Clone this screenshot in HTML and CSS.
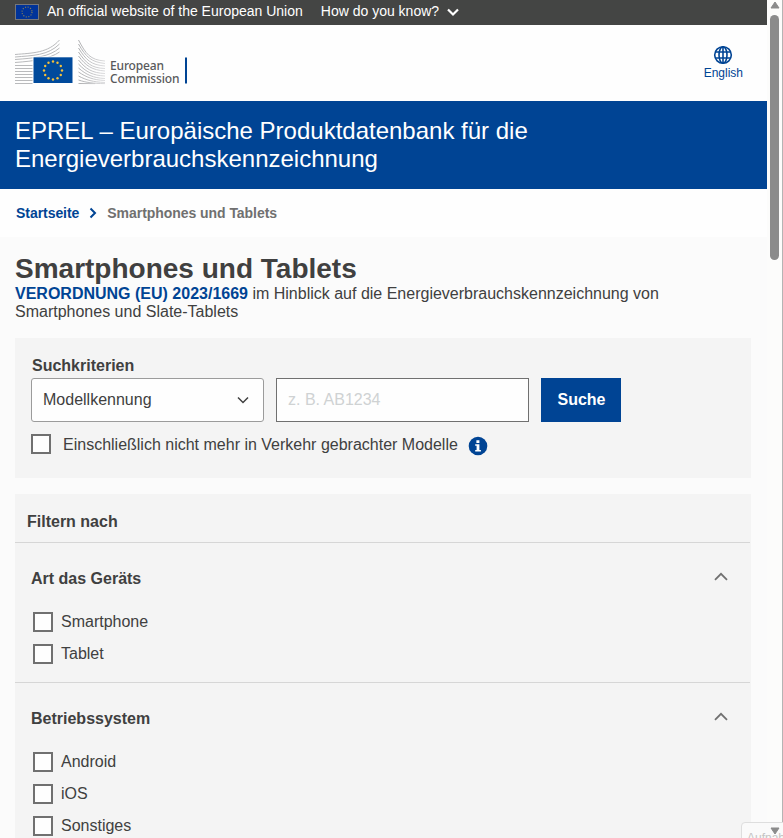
FILE: index.html
```html
<!DOCTYPE html>
<html lang="de">
<head>
    <meta charset="UTF-8">
    <meta name="viewport" content="width=device-width, initial-scale=1.0">
    <title>EPREL – Smartphones und Tablets</title>
    <link rel="stylesheet" href="styles.css">
</head>
<body>
    <div class="page">
        <div class="globan">
            <svg class="globan-flag" width="24" height="16" viewBox="0 0 24 16">
                <rect x="0.5" y="0.5" width="23" height="15" fill="#039" stroke="#75767a" />
                <circle cx="12" cy="8" r="5" fill="none" stroke="#8a8256" stroke-width="1.1" stroke-dasharray="1.1 1.518" />
            </svg>
            <span class="globan-text">An official website of the European Union</span>
            <a class="globan-link">How do you know?</a>
            <svg width="14" height="10" viewBox="0 0 14 10"><path d="M2 2.500l5 5 5-5" fill="none" stroke="#fff" stroke-width="2.200" /></svg>
        </div>

        <header class="site-header">
            <svg class="logo" width="174" height="48" viewBox="0 0 174 48">
                <defs>
                    <linearGradient id="fade" gradientUnits="userSpaceOnUse" x1="63" y1="0" x2="90" y2="0">
                        <stop offset="0" stop-color="#adaeb0" />
                        <stop offset="1" stop-color="#dddddf" />
                    </linearGradient>
                </defs>
                <g fill="none" stroke="#b9babc" stroke-width="1">
                    <path d="M0 15.500C18 14 33 14 44.500 1" />
                    <path d="M0 18C18 16.500 33 16.500 44.500 5" />
                    <path d="M0 20.500C20 19 34 18 44.500 9" />
                    <path d="M0 23.500C20 22 34 20 44.500 13" />
                    <path d="M0 26.500H19M0 29.500H19M0 32.500H19M0 35.500H19M0 38.500H19M0 41.500H19M0 44.500H19" />
                </g>
                <g fill="none" stroke="url(#fade)" stroke-width="1">
                    <path d="M63.500 1C71 15 75 21 90 22" />
                    <path d="M63.500 5C71 18 76 23 90 24.500" />
                    <path d="M63.500 9C71 21 76 26 90 27" />
                    <path d="M63.500 13C71 24 76 29 90 29.500" />
                    <path d="M63.500 17C71 27 77 31 90 32" />
                    <path d="M63.500 21C71 30 77 34 90 34.500" />
                    <path d="M63.500 25C71 33 78 36.500 90 37" />
                    <path d="M63.500 29C71 35.500 78 39 90 39.500" />
                    <path d="M63.500 33C71 38 78 41 90 41.500" />
                    <path d="M63.500 37C71 41 78 43 90 43.500" />
                    <path d="M63.500 41C71 43.500 78 44.500 90 44.600" />
                    <path d="M63.500 44.500L80 44.600" />
                </g>
                <rect x="17.500" y="17.500" width="41" height="27.500" fill="#fefefe" />
                <rect x="18.500" y="18.300" width="39" height="25.700" fill="#004a9c" />
                <g fill="#f3c03a">
                    <circle cx="38" cy="22.500" r="1.200" /><circle cx="42.500" cy="23.700" r="1.200" />
                    <circle cx="45.800" cy="27" r="1.200" /><circle cx="47" cy="31.500" r="1.200" />
                    <circle cx="45.800" cy="36" r="1.200" /><circle cx="42.500" cy="39.300" r="1.200" />
                    <circle cx="38" cy="40.500" r="1.200" /><circle cx="33.500" cy="39.300" r="1.200" />
                    <circle cx="30.200" cy="36" r="1.200" /><circle cx="29" cy="31.500" r="1.200" />
                    <circle cx="30.200" cy="27" r="1.200" /><circle cx="33.500" cy="23.700" r="1.200" />
                </g>
                <text class="logo-text" x="95" y="31" textLength="54">European</text>
                <text class="logo-text" x="95" y="44" textLength="69.500">Commission</text>
                <rect x="170" y="18.500" width="2" height="26" fill="#004494" />
            </svg>
            <a class="language">
                <svg width="20" height="20" viewBox="0 0 20 20" fill="none" stroke="#004494" stroke-width="1.600">
                    <circle cx="10" cy="10" r="8.300" />
                    <ellipse cx="10" cy="10" rx="4" ry="8.300" />
                    <path d="M10 1.500v17M2.500 7h15M2.500 13h15" />
                </svg>
                <span>English</span>
            </a>
        </header>

        <div class="banner">EPREL – Europäische Produktdatenbank für die Energieverbrauchskennzeichnung</div>

        <nav class="breadcrumb">
            <a class="breadcrumb-link">Startseite</a>
            <svg width="10" height="12" viewBox="0 0 10 12"><path d="M2.500 1.500L7 6l-4.500 4.500" fill="none" stroke="#004494" stroke-width="2" /></svg>
            <span>Smartphones und Tablets</span>
        </nav>

        <main class="content">
            <h1>Smartphones und Tablets</h1>
            <p class="intro"><a>VERORDNUNG (EU) 2023/1669</a> im Hinblick auf die Energieverbrauchskennzeichnung von Smartphones und Slate-Tablets</p>

            <form class="search">
                <label class="search-label">Suchkriterien</label>
                <div class="search-row">
                    <div class="select">
                        <span>Modellkennung</span>
                        <svg width="12" height="8" viewBox="0 0 12 8"><path d="M1 1.500l5 5 5-5" fill="none" stroke="#404040" stroke-width="1.500" /></svg>
                    </div>
                    <input class="search-input" type="text" placeholder="z. B. AB1234">
                    <button class="search-button" type="button">Suche</button>
                </div>
                <label class="check check-old">
                    <input type="checkbox">
                    <span>Einschließlich nicht mehr in Verkehr gebrachter Modelle</span>
                    <svg class="info" width="20" height="20" viewBox="0 0 20 20">
                        <circle cx="10" cy="10" r="9.300" fill="#004494" />
                        <path d="M8.400 4.300h3v2.700h-3zM7.200 8.200h4.200v5.700h1.500v1.600H7.200v-1.600h1.400V9.800H7.200z" fill="#fff" />
                    </svg>
                </label>
            </form>

            <section class="filters">
                <h2>Filtern nach</h2>
                <div class="filter-group">
                    <div class="filter-head">
                        <h3>Art das Geräts</h3>
                        <svg width="14" height="9" viewBox="0 0 14 9"><path d="M1 7.800l6-6 6 6" fill="none" stroke="#707070" stroke-width="1.800" /></svg>
                    </div>
                    <label class="check"><input type="checkbox"><span>Smartphone</span></label>
                    <label class="check"><input type="checkbox"><span>Tablet</span></label>
                </div>
                <div class="filter-group">
                    <div class="filter-head">
                        <h3>Betriebssystem</h3>
                        <svg width="14" height="9" viewBox="0 0 14 9"><path d="M1 7.800l6-6 6 6" fill="none" stroke="#707070" stroke-width="1.800" /></svg>
                    </div>
                    <label class="check"><input type="checkbox"><span>Android</span></label>
                    <label class="check"><input type="checkbox"><span>iOS</span></label>
                    <label class="check"><input type="checkbox"><span>Sonstiges</span></label>
                </div>
            </section>
        </main>
    </div>

    <div class="scrollbar">
        <svg width="10" height="8" viewBox="0 0 10 8"><path d="M5 1l4 6H1z" fill="#8b8b8b" stroke="#8b8b8b" stroke-linejoin="round" /></svg>
        <div class="scrollbar-thumb"></div>
        <svg class="scrollbar-down" width="10" height="8" viewBox="0 0 10 8"><path d="M5 7l4-6H1z" fill="#8b8b8b" stroke="#8b8b8b" stroke-linejoin="round" /></svg>
    </div>

    <div class="tooltip">Aufnahme</div>
</body>
</html>
```
FILE: styles.css
```css
* {
    box-sizing: border-box;
}

body {
    display: flex;
    position: relative;
    height: 838px;
    margin: 0;
    overflow: hidden;
    font-family: "Liberation Sans", Arial, sans-serif;
    font-size: 16px;
    color: #404040;
    background: #fbfbfb;
}

svg {
    display: block;
    flex: none;
}

h1, h2, h3, p {
    margin: 0;
}

.page {
    width: 767px;
    flex: none;
}

.globan {
    display: flex;
    align-items: center;
    height: 25px;
    padding: 0 15px 2px;
    font-size: 14px;
    color: #fff;
    background: #444544;
}

.globan-text,
.globan-link {
    padding-bottom: 2px;
}

.globan-text {
    margin: 0 18px 0 8px;
}

.globan-link {
    margin-right: 7px;
}

.site-header {
    display: flex;
    justify-content: space-between;
    height: 76px;
    padding: 14px 24px 0 15px;
    background: #fefefe;
}

.logo-text {
    font-family: "Noto Sans", sans-serif;
    font-size: 12px;
    font-weight: 500;
    fill: #58595b;
}

.language {
    display: flex;
    flex-direction: column;
    align-items: center;
    padding-top: 6px;
    font-size: 12px;
    line-height: 16px;
    color: #004494;
}

.banner {
    height: 88px;
    padding: 16px 200px 0 15px;
    font-size: 24px;
    line-height: 28px;
    color: #fff;
    background: #004494;
}

.breadcrumb {
    display: flex;
    align-items: center;
    gap: 9px;
    height: 48px;
    padding: 0 16px;
    font-size: 14px;
    font-weight: bold;
    letter-spacing: -0.05px;
    color: #707070;
    background: #fefefe;
}

.breadcrumb-link {
    color: #004494;
}

.content {
    padding: 16px 16px 0 15px;
}

h1 {
    font-size: 28px;
    line-height: 32px;
}

.intro {
    width: 670px;
    line-height: 18px;
}

.intro a {
    font-weight: bold;
    color: #004494;
}

.search {
    height: 140px;
    margin-top: 17px;
    padding: 18px 16px 0;
    background: #f4f4f4;
}

.search-label {
    display: block;
    padding-left: 1px;
    font-weight: bold;
    line-height: 20px;
}

.search-row {
    display: flex;
    gap: 12px;
    margin-top: 2px;
}

.select {
    display: flex;
    justify-content: space-between;
    align-items: center;
    width: 233px;
    height: 44px;
    padding: 0 14px 0 11px;
    border: 1px solid #9b9b9b;
    border-radius: 3px;
    background: #fefefe;
}

.search-input {
    width: 253px;
    height: 44px;
    padding: 0 11px;
    border: 1px solid #707070;
    font: inherit;
    background: #fefefe;
}

.search-input::placeholder {
    color: #cfd2d3;
}

.search-button {
    width: 80px;
    height: 44px;
    padding: 0 0 0 1px;
    border: 0;
    font: inherit;
    font-weight: bold;
    color: #fff;
    background: #004494;
}

.check {
    display: flex;
    align-items: center;
    gap: 8px;
    height: 32px;
    padding-left: 18px;
}

.check input {
    width: 20px;
    height: 20px;
    margin: 0;
    border: 2px solid #707070;
    background: #fefefe;
    appearance: none;
}

.check span {
    margin-top: -1px;
}

.check-old {
    gap: 12px;
    margin-top: 6px;
    padding-left: 0;
}

.check-old span {
    margin-top: 1px;
}

.check-old .info {
    margin: 4px 0 0 -2px;
}

.filters {
    height: 360px;
    margin-top: 16px;
    background: #f4f4f4;
}

.filters h2 {
    height: 48px;
    padding-left: 12px;
    font-size: 16px;
    line-height: 56px;
}

.filter-group {
    height: 140px;
    margin-right: 1px;
    padding-top: 20px;
    border-top: 1px solid #d6d6d6;
}

.filter-head {
    display: flex;
    justify-content: space-between;
    align-items: center;
    height: 30px;
    margin-bottom: 13px;
    padding: 0 22px 0 16px;
}

.filter-head h3 {
    padding-top: 2px;
    font-size: 16px;
}

.filter-head svg {
    margin-bottom: 3px;
}

/* browser scrollbar */
.scrollbar {
    display: flex;
    flex-direction: column;
    align-items: center;
    width: 16px;
    padding-top: 1px;
    border-right: 1px solid #b4b4b4;
    background: #fcfcfb;
}

.scrollbar-thumb {
    width: 9px;
    height: 245px;
    margin-top: 6px;
    border-radius: 5px;
    background: #8b8b8b;
}

.scrollbar-down {
    position: relative;
    z-index: 2;
    margin-top: auto;
    margin-bottom: 3px;
}

.tooltip {
    position: absolute;
    left: 741px;
    top: 822px;
    width: 60px;
    height: 30px;
    padding: 9px 0 0 5px;
    border: 1px solid #dedede;
    border-radius: 4px;
    font-size: 12px;
    line-height: 12px;
    color: #c4c4c4;
    background: #fafafa;
}
```
